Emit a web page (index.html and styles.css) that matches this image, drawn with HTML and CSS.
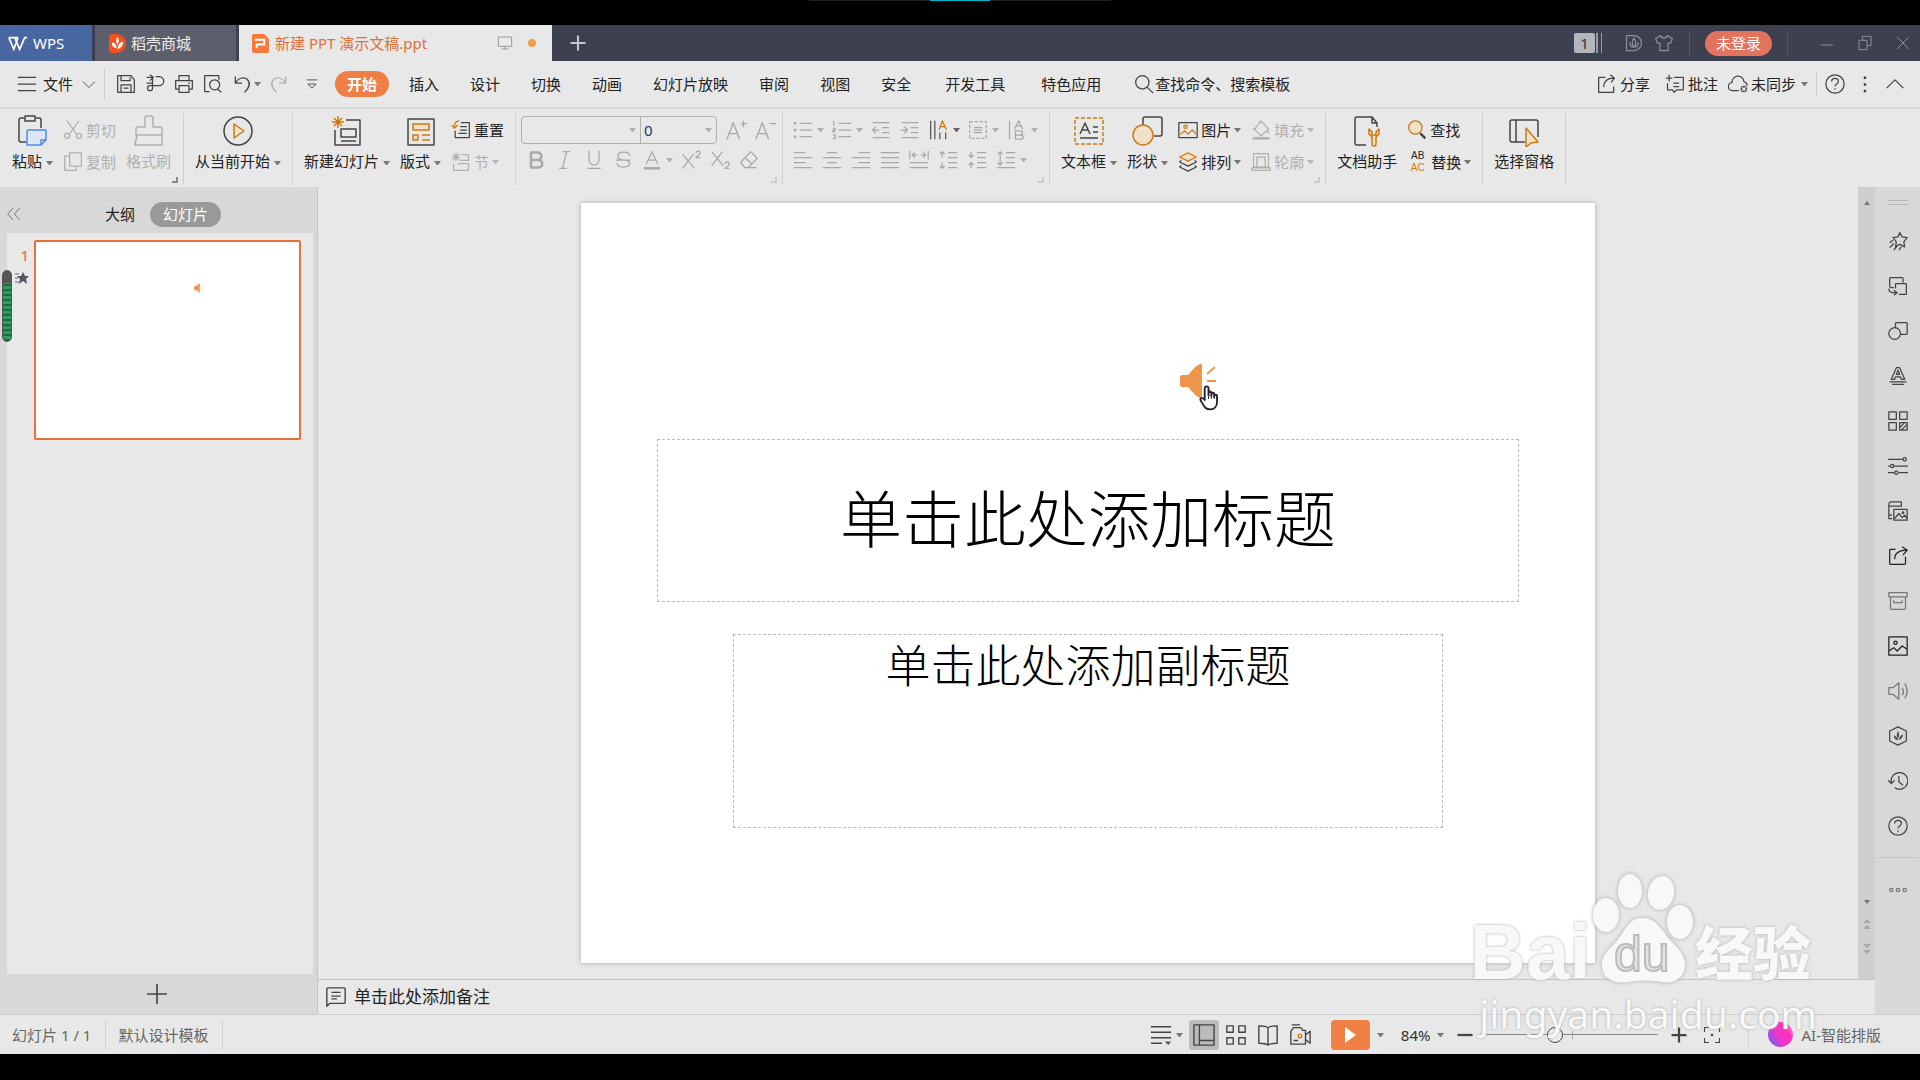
FILE: index.html
```html
<!DOCTYPE html>
<html lang="zh-CN">
<head>
    <meta charset="UTF-8">
    <meta name="viewport" content="width=device-width, initial-scale=1.0">
    <title>新建 PPT 演示文稿.ppt</title>
    <link rel="stylesheet" href="styles.css">
</head>
<body>
    <div class="top-edge"><span class="edge-line"></span></div>

    <!-- tabs -->
    <header class="titlebar">
        <button class="tab tab-wps">
            <svg class="logo-w" viewBox="0 0 24 20"><path d="M1 3h11M1 3l6 14 5-14M8 3l6 14 6-14h3M12 3l-2 5"/></svg>
            WPS
        </button>
        <button class="tab tab-store">
            <svg class="logo-s" viewBox="0 0 18 20"><path fill="#f4511e" d="M0 3a3 3 0 0 1 3-3h5a10 10 0 0 1 0 20H3a3 3 0 0 1-3-3z"/><path fill="#fff" d="M9 3c2 3 2 5 0 8-2-3-2-5 0-8zM3 9c3 0 5 2 5 6-3 0-5-2-5-6zM15 8c0 4-2 7-6 8 0-4 2-7 6-8z"/></svg>
            稻壳商城
        </button>
        <div class="tab tab-file">
            <svg class="logo-p" viewBox="0 0 18 20"><path fill="#f77a3c" d="M2 0h11l5 5v13a2 2 0 0 1-2 2H2a2 2 0 0 1-2-2V2a2 2 0 0 1 2-2z"/><path fill="none" stroke="#fff" stroke-width="2" d="M3 6h10v5H5v4"/></svg>
            <span class="file-name">新建 PPT 演示文稿.ppt</span>
            <svg class="ic s16 grey" viewBox="0 0 24 24"><path d="M2 3h20v14H2zM12 17v4M7 21h10"/></svg>
            <span class="unsaved"></span>
        </div>
        <button class="new-tab" aria-label="新建标签"><svg class="ic s20" viewBox="0 0 24 24"><path d="M12 3v18M3 12h18"/></svg></button>
        <div class="window-tools">
            <span class="count">1</span><span class="stack"></span>
            <button aria-label="稻壳"><svg class="ic s20" viewBox="0 0 24 24"><path d="M3 3h9a9 9 0 0 1 0 18H3zM12 6c3 4 3 7 0 11-3-4-3-7 0-11zM7 11c0 4 2 6 5 6 3 0 5-2 5-6"/></svg></button>
            <button aria-label="皮肤"><svg class="ic s20" viewBox="0 0 24 24"><path d="M8 3c1 4 7 4 8 0l6 4-2 5h-3v9H7v-9H4L2 7z"/></svg></button>
            <span class="bar"></span>
            <button class="login">未登录</button>
            <span class="bar"></span>
            <button class="win" aria-label="最小化"><svg class="ic s16" viewBox="0 0 24 24"><path d="M3 15h18"/></svg></button>
            <button class="win" aria-label="还原"><svg class="ic s16" viewBox="0 0 24 24"><path d="M3 8h12v14H3zM8 8V2h13v14h-6"/></svg></button>
            <button class="win" aria-label="关闭"><svg class="ic s16" viewBox="0 0 24 24"><path d="M3 3l18 18M21 3L3 21"/></svg></button>
        </div>
    </header>

    <!-- menu -->
    <nav class="menubar">
        <button class="file-btn">
            <svg class="ic s20" viewBox="0 0 24 24"><path d="M1 4h22M1 12h22M1 20h22"/></svg>文件
            <svg class="ic s14 chevron" viewBox="0 0 24 24"><path d="M2 8l10 10L22 8"/></svg>
        </button>
        <div class="quick">
            <button aria-label="保存"><svg class="ic s20" viewBox="0 0 24 24"><path d="M2 2h16l4 5v15H2zM6 2v6h11V4M6 22v-9h12v9M9 17h6"/></svg></button>
            <button aria-label="输出"><svg class="ic s20" viewBox="0 0 24 24"><path d="M2 4h7v7H2M6 1l4 3-4 4M13 3h4a5 5 0 0 1 0 11H9M9 8v9a3 3 0 1 1-3-3h8"/></svg></button>
            <button aria-label="打印"><svg class="ic s20" viewBox="0 0 24 24"><path d="M6 8V2h12v6M6 18H2V8h20v10h-4M6 14h12v8H6zM17 11h2"/></svg></button>
            <button aria-label="打印预览"><svg class="ic s20" viewBox="0 0 24 24"><path d="M8 21H2V2h17v5M17 18l5 4"/><circle cx="14" cy="13" r="6"/></svg></button>
            <button class="undo" aria-label="撤消"><svg class="ic s20" viewBox="0 0 24 24"><path d="M4 3v8h8M4 11c3-6 9-8 14-5 5 5 3 10-3 16"/></svg><i class="arrow"></i></button>
            <button aria-label="恢复" class="off"><svg class="ic s20" viewBox="0 0 24 24"><path d="M20 3v8h-8M20 11c-3-6-9-8-14-5-5 5-3 10 3 16"/></svg></button>
            <button aria-label="自定义"><svg class="ic s14" viewBox="0 0 24 24"><path d="M3 5h18M5 12l7 7 7-7z"/></svg></button>
        </div>
        <div class="menu-tabs">
            <button class="active">开始</button>
            <button>插入</button>
            <button>设计</button>
            <button>切换</button>
            <button>动画</button>
            <button>幻灯片放映</button>
            <button>审阅</button>
            <button>视图</button>
            <button>安全</button>
            <button class="wide">开发工具</button>
            <button class="wide">特色应用</button>
        </div>
        <button class="search"><svg class="ic s20" viewBox="0 0 24 24"><circle cx="10" cy="10" r="8"/><path d="M16 16l7 7"/></svg>查找命令、搜索模板</button>
        <div class="menu-right">
            <button><svg class="ic s20" viewBox="0 0 24 24"><path d="M10 4H2v18h18v-7M8 16c0-7 4-11 12-11M16 1l5 4-4 5"/></svg>分享</button>
            <button><svg class="ic s20" viewBox="0 0 24 24"><path d="M11 4h11v15h-8l-3 3-2-3H3v-8M5 1v8M1 5h8M10 11h7M10 15h7"/></svg>批注</button>
            <button><svg class="ic s20" viewBox="0 0 24 24"><path d="M13 20H6a5 5 0 0 1-1-10 7 7 0 0 1 14-1c3 1 4 3 4 5"/><circle cx="19" cy="18" r="4" class="solid"/><path class="white" d="M17 16l4 4M21 16l-4 4"/></svg>未同步<i class="arrow"></i></button>
            <span class="bar"></span>
            <button aria-label="帮助"><svg class="ic s20" viewBox="0 0 24 24"><circle cx="12" cy="12" r="11"/><path d="M8 9c0-5 8-5 8 0 0 3-4 3-4 6M12 17v2"/></svg></button>
            <button class="dots" aria-label="更多"><svg class="ic s20" viewBox="0 0 24 24"><path class="heavy" d="M12 3v3M12 11v3M12 19v3"/></svg></button>
            <button aria-label="收起功能区"><svg class="ic s20" viewBox="0 0 24 24"><path d="M2 17L12 7l10 10"/></svg></button>
        </div>
    </nav>

    <!-- ribbon -->
    <section class="ribbon">
        <div class="group">
            <button class="big">
                <svg class="ic s32" viewBox="0 0 32 32"><path d="M9 27H4a2 2 0 0 1-2-2V5a2 2 0 0 1 2-2h3m12 0h3a2 2 0 0 1 2 2v8M8 1h10v5H8z"/><path class="blue" d="M13 15h16v10l-5 5H10V17a2 2 0 0 1 3-2zM29 25h-5v5"/></svg>
                <span>粘贴<i class="arrow"></i></span>
            </button>
            <div class="col off">
                <button><svg class="ic s20" viewBox="0 0 24 24"><path d="M5 1l12 17M19 1L7 18"/><circle cx="5" cy="19" r="3"/><circle cx="19" cy="19" r="3"/></svg>剪切</button>
                <button><svg class="ic s20" viewBox="0 0 24 24"><path d="M8 1h14v16H8zM8 5H2v17h14v-5"/></svg>复制</button>
            </div>
            <button class="big off">
                <svg class="ic s32" viewBox="0 0 32 32"><path d="M12 12V3a2 2 0 0 1 2-2h4a2 2 0 0 1 2 2v9h7a2 2 0 0 1 2 2v6H3v-6a2 2 0 0 1 2-2zM4 20L2 30h27V20"/></svg>
                <span>格式刷</span>
            </button>
            <i class="corner dark"></i>
        </div>
        <div class="group">
            <button class="big">
                <svg class="ic s32" viewBox="0 0 32 32"><circle cx="16" cy="16" r="14"/><path class="org" d="M12 9l10 7-10 7z"/></svg>
                <span>从当前开始<i class="arrow"></i></span>
            </button>
        </div>
        <div class="group">
            <button class="big">
                <svg class="ic s32" viewBox="0 0 32 32"><path d="M15 5h14v25H4V15M10 14h15v8H10zM10 26h15"/><path class="org" d="M7 1v12M1 7h12M3 3l8 8M11 3l-8 8"/></svg>
                <span>新建幻灯片<i class="arrow"></i></span>
            </button>
            <button class="big">
                <svg class="ic s32" viewBox="0 0 32 32"><path d="M3 4h26v26H3z"/><path class="org" d="M8 9h16v6H8zM8 20h5v5H8zM17 20h8M17 25h8"/></svg>
                <span>版式<i class="arrow"></i></span>
            </button>
            <div class="col">
                <button><svg class="ic s20" viewBox="0 0 24 24"><path d="M12 3h10v18H5v-8M11 8h8M11 12h8M9 16h10"/><path class="org line" d="M10 1C5 1 4 4 4 9M1 6l3 4 4-4"/></svg>重置</button>
                <button class="off"><svg class="ic s20" viewBox="0 0 24 24"><path d="M12 3h9v7H11M3 14v8h18v-8H8M6 1v10M1 6h10M2 2l8 8M10 2l-8 8"/></svg>节<i class="arrow"></i></button>
            </div>
        </div>
        <div class="group font-group">
            <div class="rows">
                <div class="row">
                    <div class="combo">
                        <label class="font-name"><select aria-label="字体"><option></option></select><i class="arrow"></i></label>
                        <label class="font-size"><select aria-label="字号"><option>0</option></select><i class="arrow"></i></label>
                    </div>
                    <button aria-label="增大字号"><svg class="ic s22" viewBox="0 0 24 24"><path d="M2 22L9 4l7 18M4 16h10M20 2v7M17 5h7"/></svg></button>
                    <button aria-label="减小字号"><svg class="ic s22" viewBox="0 0 24 24"><path d="M2 22L9 4l7 18M4 16h10M17 5h7"/></svg></button>
                </div>
                <div class="row">
                    <button aria-label="加粗"><svg class="ic s20" viewBox="0 0 24 24"><path class="heavy" d="M6 3h8a4 4 0 0 1 0 9H6zM6 12h9a4 4 0 0 1 0 9H6z"/></svg></button>
                    <button aria-label="倾斜"><svg class="ic s20" viewBox="0 0 24 24"><path d="M9 2h9M5 22h9M14 2L9 22"/></svg></button>
                    <button aria-label="下划线"><svg class="ic s20" viewBox="0 0 24 24"><path d="M6 1v11a6 6 0 0 0 12 0V1M4 22h16"/></svg></button>
                    <button aria-label="删除线"><svg class="ic s20" viewBox="0 0 24 24"><path d="M20 7c0-6-14-6-14 0 0 3 2 5 7 5h8M3 12h10c4 0 7 1 7 4 0 6-15 6-15 0"/></svg></button>
                    <button class="split" aria-label="字体颜色"><svg class="ic s20" viewBox="0 0 24 24"><path d="M5 17l7-15 7 15M7 12h10"/><path class="heavy" d="M2 22h20"/></svg><i class="arrow"></i></button>
                    <button aria-label="上标"><svg class="ic s20" viewBox="0 0 24 24"><path d="M2 5l14 17M15 5L2 22M18 4c0-4 5-3 5 0 0 2-5 4-5 5h5"/></svg></button>
                    <button aria-label="下标"><svg class="ic s20" viewBox="0 0 24 24"><path d="M2 2l14 17M15 2L2 19M18 17c0-4 5-3 5 0 0 2-5 4-5 5h5"/></svg></button>
                    <button aria-label="清除格式"><svg class="ic s20" viewBox="0 0 24 24"><path d="M14 2l8 8-11 11H7l-5-6zM7 9l9 8M6 21h15"/></svg></button>
                </div>
            </div>
            <i class="corner"></i>
        </div>
        <div class="group para-group">
            <div class="rows">
                <div class="row">
                    <button class="split" aria-label="项目符号"><svg class="ic s20" viewBox="0 0 24 24"><path d="M8 4h15M8 12h15M8 20h15"/><path class="heavy" d="M1 4h3M1 12h3M1 20h3"/></svg><i class="arrow"></i></button>
                    <button class="split" aria-label="编号"><svg class="ic s20" viewBox="0 0 24 24"><path d="M8 4h15M8 12h15M8 20h15M2 1v6M1 10h3v2H1v2h3M1 18h3v4H1"/></svg><i class="arrow"></i></button>
                    <button aria-label="减少缩进"><svg class="ic s20" viewBox="0 0 24 24"><path d="M2 3h20M13 9h9M13 15h9M2 21h20M10 12H2M6 8l-4 4 4 4"/></svg></button>
                    <button aria-label="增加缩进"><svg class="ic s20" viewBox="0 0 24 24"><path d="M2 3h20M13 9h9M13 15h9M2 21h20M1 12h8M5 8l4 4-4 4"/></svg></button>
                    <button class="split on" aria-label="文字方向"><svg class="ic s20" viewBox="0 0 24 24"><path d="M2 1v22M7 1v22M13 15v8M20 15v8"/><path class="org line" d="M12 12l4-11 5 11M13 8h6"/></svg><i class="arrow"></i></button>
                    <button class="split" aria-label="对齐文本"><svg class="ic s20" viewBox="0 0 24 24"><path class="dash" d="M2 2h20v20H2z"/><path d="M7 9h10M7 12h10M7 15h10"/></svg><i class="arrow"></i></button>
                    <button class="split" aria-label="转换"><svg class="ic s20" viewBox="0 0 24 24"><path d="M3 1v22M9 11l5-10 5 10M11 7h6M10 13h6a2 2 0 0 1 0 5h-6zM10 18h7a2 2 0 0 1 0 5h-7z"/></svg><i class="arrow"></i></button>
                </div>
                <div class="row">
                    <button aria-label="左对齐"><svg class="ic s20" viewBox="0 0 24 24"><path d="M1 3h14M1 9h22M1 15h14M1 21h22"/></svg></button>
                    <button aria-label="居中"><svg class="ic s20" viewBox="0 0 24 24"><path d="M6 3h12M1 9h22M6 15h12M1 21h22"/></svg></button>
                    <button aria-label="右对齐"><svg class="ic s20" viewBox="0 0 24 24"><path d="M9 3h14M1 9h22M9 15h14M1 21h22"/></svg></button>
                    <button aria-label="两端对齐"><svg class="ic s20" viewBox="0 0 24 24"><path d="M1 3h22M1 9h22M1 15h22M1 21h22"/></svg></button>
                    <button aria-label="分散对齐"><svg class="ic s20" viewBox="0 0 24 24"><path d="M1 1v10M23 1v10M4 6h6M14 6h6M7 3L4 6l3 3M17 3l3 3-3 3M1 15h22M1 21h22"/></svg></button>
                    <button aria-label="增加行距"><svg class="ic s20" viewBox="0 0 24 24"><path d="M12 3h11M12 9h11M12 15h11M12 21h11M5 9V2M2 5l3-3 3 3M5 15v7M2 19l3 3 3-3"/></svg></button>
                    <button aria-label="减少行距"><svg class="ic s20" viewBox="0 0 24 24"><path d="M12 3h11M12 9h11M12 15h11M12 21h11M5 2v7M2 6l3 3 3-3M5 22v-7M2 18l3-3 3 3"/></svg></button>
                    <button class="split" aria-label="行距"><svg class="ic s20" viewBox="0 0 24 24"><path d="M12 3h11M12 9h11M12 15h11M1 21h22M5 2v16M2 5l3-3 3 3M2 15l3 3 3-3"/></svg><i class="arrow"></i></button>
                </div>
            </div>
            <i class="corner"></i>
        </div>
        <div class="group">
            <button class="big">
                <svg class="ic s32" viewBox="0 0 32 32"><path class="org line dash" d="M2 3h28v26H2z"/><path d="M7 19l5-11 5 11M9 15h6M20 12h5M20 17h5M7 23h18"/></svg>
                <span>文本框<i class="arrow"></i></span>
            </button>
            <button class="big">
                <svg class="ic s32" viewBox="0 0 32 32"><path d="M11 10V4a2 2 0 0 1 2-2h15a2 2 0 0 1 2 2v15a2 2 0 0 1-2 2h-6"/><circle class="org" cx="11" cy="20" r="10"/></svg>
                <span>形状<i class="arrow"></i></span>
            </button>
            <div class="col">
                <button><svg class="ic s20" viewBox="0 0 24 24"><path d="M1 3h22v18H1z"/><path class="org line" d="M3 17l5-4 4 4 5-5 5 5"/><circle class="org" cx="9" cy="8" r="2"/></svg>图片<i class="arrow"></i></button>
                <button><svg class="ic s20" viewBox="0 0 24 24"><path class="org" d="M12 1l10 5-10 5L2 6z"/><path d="M4 10l-2 2 10 5 10-5-2-2M4 16l-2 2 10 5 10-5-2-2"/></svg>排列<i class="arrow"></i></button>
            </div>
            <div class="col off">
                <button><svg class="ic s20" viewBox="0 0 24 24"><path d="M9 4l3-3 9 10-9 8-8-8 8-9M2 11h4M19 13l3 3"/><path class="heavy" d="M2 22h20"/></svg>填充<i class="arrow"></i></button>
                <button><svg class="ic s20" viewBox="0 0 24 24"><path d="M3 2h18v16H3zM7 6h10v12H7zM1 19h22v3H1z"/></svg>轮廓<i class="arrow"></i></button>
            </div>
            <i class="corner"></i>
        </div>
        <div class="group">
            <button class="big">
                <svg class="ic s32" viewBox="0 0 32 32"><path d="M15 30H6a2 2 0 0 1-2-2V4a2 2 0 0 1 2-2h15l5 6v4M21 2v6h5"/><path class="org" d="M18 14v5l3 3v7a2 2 0 0 0 4 0v-7l3-3v-5l-3 3v3h-4v-3z"/></svg>
                <span>文档助手</span>
            </button>
            <div class="col">
                <button><svg class="ic s20" viewBox="0 0 24 24"><circle class="org" cx="10" cy="9" r="8"/><path class="heavy" d="M16 16l6 6"/></svg>查找</button>
                <button>
                    <span class="abac"><b>AB</b><b>AC</b></span>替换<i class="arrow"></i>
                </button>
            </div>
        </div>
        <div class="group">
            <button class="big">
                <svg class="ic s32" viewBox="0 0 32 32"><path d="M17 27H4a2 2 0 0 1-2-2V7a2 2 0 0 1 2-2h24a2 2 0 0 1 2 2v15M8 5v22"/><path class="org" d="M18 13l12 14-7 1-5 4z"/></svg>
                <span>选择窗格</span>
            </button>
        </div>
    </section>

    <main class="workspace">
        <aside class="slides-panel">
            <div class="panel-head">
                <button class="fold" aria-label="折叠"><svg class="ic s16" viewBox="0 0 24 24"><path d="M9 3l-8 9 8 9M19 3l-8 9 8 9"/></svg></button>
                <button class="panel-tab">大纲</button>
                <button class="panel-tab chosen">幻灯片</button>
            </div>
            <div class="thumb-list">
                <div class="thumb-info">
                    <b>1</b>
                    <svg class="anim" viewBox="0 0 14 12"><path d="M0 2h4M0 6h3M0 10h4" stroke="#667" fill="none"/><path fill="#556" d="M8 0l2 4h4l-3 3 1 5-4-3-4 3 1-5-3-3h4z"/></svg>
                </div>
                <button class="thumb" aria-label="幻灯片 1">
                    <svg class="thumb-audio" viewBox="0 0 36 36"><path fill="#f0954c" d="M0 12h7L21 1v34L7 25H0z"/><path stroke="#f6c79c" stroke-width="3" d="M27 11l8-7M27 18h9M27 25l8 7"/></svg>
                </button>
            </div>
            <button class="add-slide" aria-label="新建幻灯片"><svg class="ic s20" viewBox="0 0 24 24"><path d="M12 0v24M0 12h24"/></svg></button>
            <div class="meter"></div>
        </aside>

        <div class="center">
            <div class="stage-row">
                <div class="stage">
                    <div class="slide">
                        <div class="holder title">单击此处添加标题</div>
                        <div class="holder subtitle">单击此处添加副标题</div>
                        <svg class="audio" viewBox="0 0 36 36"><path fill="#f0954c" d="M2 12h6C12 8 15 3 20 1q2-1 2 1v32q0 2-2 1C15 33 12 28 8 24H2q-2 0-2-2v-8q0-2 2-2z"/><path fill="none" stroke="#f0954c" stroke-width="2" d="M27 11l8-7M27 18h9M27 25l8 7"/></svg>
                        <svg class="hand" viewBox="0 0 20 26"><path fill="#fff" stroke="#223" stroke-width="2" stroke-linejoin="round" d="M6 15V3c0-3 4-3 4 0v7-2c0-2 3-2 3 0v3-2c0-2 3-2 3 0v3-1c0-2 3-2 3 0v6c0 5-3 8-7 8-5 0-6-2-10-9-2-3 2-4 4-1z"/><path stroke="#223" d="M10 9v5M13 10v4M16 11v3"/></svg>
                    </div>
                </div>
                <div class="scroll">
                    <i class="tri up"></i>
                    <span class="track"></span>
                    <i class="tri down"></i>
                    <svg class="jump" viewBox="0 0 8 10"><path d="M0 4l4-4 4 4zM0 10l4-4 4 4z"/></svg>
                    <svg class="jump" viewBox="0 0 8 10"><path d="M0 0l4 4 4-4zM0 6l4 4 4-4z"/></svg>
                </div>
            </div>
            <div class="notes">
                <svg class="ic s22" viewBox="0 0 24 24"><path d="M2 22V3a1 1 0 0 1 1-1h18a1 1 0 0 1 1 1v15a1 1 0 0 1-1 1H5zM7 7h10M7 11h10M7 14h6"/></svg>
                单击此处添加备注
            </div>
        </div>

        <aside class="rail">
            <span class="grip"></span>
            <button aria-label="动画"><svg class="ic s20" viewBox="0 0 24 24"><path d="M14 2l3 5 6 1-4 5 1 6-6-3-5 3 1-6-4-5 6-1zM6 11l-4 3M7 15l-5 5M11 18l-4 5M16 19l-3 4"/></svg></button>
            <button aria-label="切换"><svg class="ic s20" viewBox="0 0 24 24"><path d="M7 14H4a2 2 0 0 1-2-2V3a1 1 0 0 1 1-1h14a1 1 0 0 1 1 1v5M9 9h13v13H13M9 9v6M1 15c0 3 2 5 5 5h4M7 17l4 3-4 3"/></svg></button>
            <button aria-label="形状"><svg class="ic s20" viewBox="0 0 24 24"><circle cx="8" cy="15" r="7"/><path d="M9 8V3a1 1 0 0 1 1-1h12a1 1 0 0 1 1 1v12a1 1 0 0 1-1 1h-7"/></svg></button>
            <button aria-label="艺术字"><svg class="ic s20" viewBox="0 0 24 24"><path d="M4 16L10 2h4l6 14h-4l-1-3H9l-1 3zM10 10l2-5 2 5zM2 19h20M5 22h14"/></svg></button>
            <button aria-label="模板"><svg class="ic s20" viewBox="0 0 24 24"><path d="M1 1h9v9H1zM14 1h9v9h-9zM1 14h9v9H1zM14 14h9v9h-9zM14 20l6-6M16 23l7-7"/></svg></button>
            <button aria-label="属性"><svg class="ic s20" viewBox="0 0 24 24"><path d="M0 4h18M0 12h2M7 12h17M0 20h8M13 20h11"/><circle cx="20" cy="4" r="2"/><circle cx="5" cy="12" r="2"/><circle cx="10" cy="20" r="2"/></svg></button>
            <button aria-label="图库"><svg class="ic s20" viewBox="0 0 24 24"><path d="M5 21H1V4a3 3 0 0 1 3-3h12v6M1 6h15M7 10h16v13H7zM8 21l5-6 4 5 3-3 3 4M1 17h4"/><circle cx="18" cy="14" r="1"/></svg></button>
            <button aria-label="分享"><svg class="ic s20 deep" viewBox="0 0 24 24"><path d="M9 4H3a1 1 0 0 0-1 1v16a1 1 0 0 0 1 1h17a1 1 0 0 0 1-1v-8M8 16c0-7 5-11 15-11M17 1l6 4-5 6"/></svg></button>
            <button aria-label="归档"><svg class="ic s20 pale" viewBox="0 0 24 24"><path d="M1 2h22v5H1zM3 7v14a1 1 0 0 0 1 1h16a1 1 0 0 0 1-1V7M7 11v3h10v-3"/></svg></button>
            <button aria-label="图片"><svg class="ic s20 deep" viewBox="0 0 24 24"><path d="M1 1h22v22H1zM1 18l6-4 4 4 6-6 6 4"/><circle cx="9" cy="8" r="2"/></svg></button>
            <button aria-label="声音"><svg class="ic s20 pale" viewBox="0 0 24 24"><path d="M1 8h5l7-6v20l-7-6H1zM17 8c2 3 2 6 0 9M20 3c4 6 4 12 0 18"/></svg></button>
            <button aria-label="稻壳资源"><svg class="ic s20" viewBox="0 0 24 24"><path d="M12 1l10 5v12l-10 5-10-5V6z"/><path class="solid" d="M12 6c2 4 2 6 0 9-2-3-2-5 0-9zM7 11c3 1 5 3 5 6-3 0-5-2-5-6zM18 10c0 4-2 6-5 7 0-3 2-6 5-7z"/></svg></button>
            <button aria-label="历史"><svg class="ic s20" viewBox="0 0 24 24"><path d="M4 14a10 10 0 1 1 4 6M0 11l4 4 4-4M13 6v7l5 4"/></svg></button>
            <button aria-label="帮助"><svg class="ic s20" viewBox="0 0 24 24"><circle cx="12" cy="12" r="11"/><path d="M8 9c0-5 8-5 8 0 0 3-4 3-4 6M12 17v2"/></svg></button>
            <hr>
            <button aria-label="更多"><svg class="ic s20 pale" viewBox="0 0 24 24"><circle cx="4" cy="12" r="2"/><circle cx="12" cy="12" r="2"/><circle cx="20" cy="12" r="2"/></svg></button>
        </aside>
    </main>

    <footer class="status">
        <span class="stat">幻灯片 1 / 1</span>
        <span class="stat">默认设计模板</span>
        <div class="view-tools">
            <button aria-label="备注"><svg class="ic s22" viewBox="0 0 24 24"><path d="M1 3h22M1 9h22M1 15h22M1 21h12"/><path class="solid" d="M16 19h7l-3 4z"/></svg><i class="arrow"></i></button>
            <button class="view current" aria-label="普通视图"><svg class="ic s22" viewBox="0 0 24 24"><path d="M1 1h22v22H1zM7 1v22M7 18h16"/></svg></button>
            <button class="view" aria-label="浏览视图"><svg class="ic s22" viewBox="0 0 24 24"><path d="M2 2h7v7H2zM15 2h7v7h-7zM2 15h7v7H2zM15 15h7v7h-7z"/></svg></button>
            <button class="view" aria-label="阅读视图"><svg class="ic s22" viewBox="0 0 24 24"><path d="M12 4c-2-2-6-2-10-2v19c4 0 8 0 10 2 2-2 6-2 10-2V2c-4 0-8 0-10 2zM12 4v19"/></svg></button>
            <button class="view" aria-label="录制"><svg class="ic s22" viewBox="0 0 24 24"><path d="M2 22V8l3-4h8l2 3h3v15zM3 1h9M18 12l5-4v13l-5-4M5 18h5"/><circle class="org" cx="12" cy="13" r="2"/></svg></button>
            <button class="play" aria-label="放映"><svg viewBox="0 0 12 16"><path fill="#fff" d="M1 0l11 8-11 8z"/></svg></button>
            <i class="arrow"></i>
            <button class="percent">84%<i class="arrow"></i></button>
            <button aria-label="缩小"><svg class="ic s18" viewBox="0 0 24 24"><path class="heavy" d="M2 12h20"/></svg></button>
            <input class="zoom" type="range" min="0" max="100" value="39" aria-label="显示比例">
            <button aria-label="放大"><svg class="ic s18" viewBox="0 0 24 24"><path class="heavy" d="M2 12h20M12 2v20"/></svg></button>
            <button class="fit" aria-label="适应窗口"><svg class="ic s18" viewBox="0 0 24 24"><path d="M2 8V2h6M16 2h6v6M22 16v6h-6M8 22H2v-6"/><circle cx="12" cy="12" r="1"/></svg></button>
            <span class="bar"></span>
            <button class="ai"><span class="orb"></span>AI-智能排版</button>
        </div>
    </footer>
    <div class="bottom-edge"></div>

    <!-- watermark -->
    <div class="mark">
        <div class="mark-top">
            <span class="mark-bai">Bai</span>
            <svg class="mark-paw" viewBox="0 0 104 112">
                <g class="paw">
                    <ellipse cx="15" cy="43" rx="13" ry="17"/>
                    <ellipse cx="39" cy="19" rx="12" ry="17"/>
                    <ellipse cx="70" cy="21" rx="13" ry="17" transform="rotate(12 70 21)"/>
                    <ellipse cx="89" cy="50" rx="13" ry="17"/>
                    <path d="M51 46c15 0 19 12 28 22 10 10 16 17 15 27-2 13-13 17-24 15-8-2-24-2-32 0-15 2-26-3-27-15-1-11 7-18 14-25C34 60 37 46 51 46z"/>
                </g>
                <text x="23" y="99">du</text>
            </svg>
            <span class="mark-cn">经验</span>
        </div>
        <div class="mark-url">jingyan.baidu.com</div>
    </div>
</body>
</html>
```

FILE: styles.css
```css
* {
    box-sizing: border-box;
}
html, body {
    height: 100%;
    margin: 0;
}
body {
    display: flex;
    flex-direction: column;
    overflow: hidden;
    position: relative;
    background: #e8e8e8;
    color: #222;
    font-family: "Noto Sans", "Noto Sans CJK SC", sans-serif;
    font-size: 15px;
    line-height: 20px;
}
button {
    display: flex;
    align-items: center;
    padding: 0;
    border: none;
    background: none;
    color: inherit;
    font: inherit;
    white-space: nowrap;
}

/* icons */
.ic {
    flex: none;
    fill: none;
    stroke: #444;
    stroke-width: 1.5;
    stroke-linejoin: round;
}
.s14 { width: 14px; height: 14px; }
.s16 { width: 16px; height: 16px; }
.s18 { width: 18px; height: 18px; }
.s20 { width: 20px; height: 20px; }
.s22 { width: 22px; height: 22px; }
.s32 { width: 32px; height: 32px; }
.heavy { stroke-width: 3; }
.solid { fill: #555; stroke: none; }
.white { stroke: #fff; }
.blue { stroke: #4f8ae8; fill: #dbe6f7; }
.org { stroke: #cc7a10; fill: #f1e0c8; }
.line { fill: none; }
.dash { stroke-dasharray: 4 2; }
.grey { stroke: #999; }
.pale { stroke: #777; }
.deep { stroke: #222; }
.arrow {
    flex: none;
    display: inline-block;
    width: 7px;
    margin-left: 4px;
    border: 3px solid transparent;
    border-top: 4px solid #777;
    border-bottom: none;
    vertical-align: middle;
}
.off {
    color: #b0b0b0;
}
.off .ic, .off.ic {
    stroke: #b0b0b0;
}
.off .arrow {
    border-top-color: #b8b8b8;
}
.bar {
    width: 1px;
    height: 26px;
    background: #d0d0d0;
}

.top-edge {
    flex: none;
    height: 25px;
    background: #000;
    display: flex;
    justify-content: center;
    align-items: flex-start;
}
.edge-line {
    width: 302px;
    height: 1px;
    background: linear-gradient(90deg, #222 40%, #00b7c3 40%, #00b7c3 60%, #222 60%);
}
.bottom-edge {
    flex: none;
    height: 26px;
    background: #000;
}

/* title bar */
.titlebar {
    flex: none;
    height: 36px;
    display: flex;
    background: #3d404e;
    color: #fff;
}
.tab {
    margin-right: 3px;
    gap: 5px;
}
.tab-wps {
    width: 92px;
    padding-left: 8px;
    background: #4866a0;
}
.logo-w {
    width: 20px;
    height: 17px;
    fill: none;
    stroke: #fff;
    stroke-width: 2;
}
.tab-store {
    width: 141px;
    padding-left: 14px;
    background: #5c5f6b;
    color: #eee;
}
.logo-s, .logo-p {
    width: 17px;
    height: 19px;
}
.tab-file {
    width: 313px;
    display: flex;
    align-items: center;
    gap: 6px;
    margin: 0;
    padding: 0 16px 0 13px;
    background: #e8e8e8;
    color: #e0703a;
}
.file-name {
    flex: 1;
}
.unsaved {
    width: 8px;
    height: 8px;
    margin-left: 9px;
    border-radius: 50%;
    background: #eca04e;
}
.new-tab {
    padding: 0 16px;
}
.new-tab .ic {
    stroke: #c4c6cc;
    stroke-width: 2.5;
}
.window-tools {
    display: flex;
    align-items: center;
    margin-left: auto;
    padding-right: 9px;
}
.window-tools .ic {
    stroke: #8b8e99;
}
.window-tools button {
    margin-left: 10px;
}
.window-tools .bar {
    margin: 0 0 0 15px;
    height: 24px;
    background: #555866;
}
.window-tools .login {
    margin-left: 15px;
    height: 25px;
    padding: 0 11px;
    border-radius: 13px;
    background: #e2735c;
}
.window-tools .win {
    margin-left: 22px;
}
.window-tools .bar + .win {
    margin-left: 31px;
}
.count {
    width: 21px;
    border-radius: 2px;
    background: #b4b6bd;
    color: #333;
    text-align: center;
}
.stack {
    width: 6px;
    height: 20px;
    margin: 0 12px 0 1px;
    border: solid #9a9ca6;
    border-width: 0 1px 0 2px;
}

/* menu bar */
.menubar {
    flex: none;
    height: 48px;
    display: flex;
    align-items: center;
    border-bottom: 2px solid #d8d8d8;
}
.file-btn {
    height: 30px;
    padding: 0 8px 0 17px;
    gap: 6px;
    border-right: 1px solid #ccc;
}
.chevron {
    margin-left: 3px;
}
.quick {
    display: flex;
    padding-left: 6px;
}
.quick button {
    min-width: 29px;
    justify-content: center;
}
.quick .arrow {
    margin-left: 2px;
}
.quick .undo {
    margin: 0 3px 0 5px;
}
.quick button:last-child {
    margin-left: 4px;
}
.menu-tabs {
    display: flex;
    padding-left: 9px;
}
.menu-tabs button {
    height: 26px;
    padding: 0 16px 0 15px;
}
.menu-tabs .wide {
    padding: 0 18px;
}
.menu-tabs .active {
    padding: 0 12px;
    margin-right: 5px;
    border-radius: 13px;
    background: #ee8047;
    color: #fff;
    font-weight: bold;
}
.search {
    margin-left: 15px;
    gap: 1px;
}
.menu-right {
    display: flex;
    align-items: center;
    gap: 10px;
    margin-left: auto;
    padding-right: 15px;
}
.menu-right button {
    gap: 3px;
}
.menu-right button:first-child {
    margin-right: 5px;
}
.menu-right .arrow {
    margin-left: 2px;
}
.menu-right .bar {
    margin: 0 -2px;
}

/* ribbon */
.ribbon {
    flex: none;
    height: 78px;
    display: flex;
    padding-top: 4px;
}
.group {
    position: relative;
    display: flex;
    align-items: flex-start;
    gap: 10px;
    height: 72px;
    padding: 2px 11px;
    border-right: 1px solid #d0d0d0;
}
.group:first-child {
    padding: 2px 12px;
}
.big {
    flex-direction: column;
    gap: 4px;
}
.col {
    display: flex;
    flex-direction: column;
    gap: 2px;
}
.col button {
    height: 30px;
    gap: 3px;
}
.col .arrow {
    margin-left: 0;
}
.abac {
    width: 21px;
    display: flex;
    flex-direction: column;
    font-family: "Liberation Sans", sans-serif;
    font-size: 10px;
    line-height: 12px;
}
.abac b {
    font-weight: normal;
}
.abac b + b {
    color: #cc7a10;
}
.row {
    display: flex;
    align-items: center;
    height: 30px;
}
.row button {
    min-width: 29px;
    justify-content: center;
}
.row .split {
    min-width: 39px;
    padding-left: 5px;
    justify-content: flex-start;
}
.rows .ic {
    stroke: #a8a8a8;
}
.rows .arrow {
    border-top-color: #b0b0b0;
}
.rows .on .ic {
    stroke: #555;
}
.rows .on .arrow {
    border-top-color: #666;
}
.font-group {
    padding: 2px 3px 2px 5px;
}
.para-group {
    padding: 2px 8px 2px 5px;
}
.combo {
    display: flex;
    height: 28px;
    margin-right: 4px;
    border: 1px solid #b0b0b0;
    border-radius: 4px;
}
.combo label {
    display: flex;
    align-items: center;
    padding-right: 4px;
}
.combo select {
    flex: 1;
    min-width: 0;
    padding: 0 3px;
    appearance: none;
    border: none;
    background: none;
    font: inherit;
    color: #223a66;
}
.font-name {
    width: 119px;
    border-right: 1px solid #b0b0b0;
}
.font-size {
    width: 75px;
}
.corner {
    position: absolute;
    right: 5px;
    bottom: 2px;
    width: 6px;
    height: 6px;
    border: solid #ccc;
    border-width: 0 2px 2px 0;
}
.corner.dark {
    border-color: #888;
}

/* workspace */
.workspace {
    flex: 1;
    min-height: 0;
    display: flex;
    border-bottom: 1px solid #ccc;
}
.slides-panel {
    position: relative;
    width: 318px;
    flex: none;
    display: flex;
    flex-direction: column;
    padding: 0 4px 0 7px;
    border-right: 1px solid #c4c4c4;
    background: #d8d8d8;
}
.panel-head {
    height: 46px;
    display: flex;
    align-items: center;
    padding-top: 8px;
}
.fold {
    margin-right: 82px;
}
.fold .ic {
    stroke: #777;
}
.panel-tab.chosen {
    height: 25px;
    margin-left: 15px;
    padding: 0 13px;
    border-radius: 13px;
    background: #999;
    color: #fff;
}
.thumb-list {
    flex: 1;
    display: flex;
    align-items: flex-start;
    padding: 7px 12px 0 5px;
    background: #e8e8e8;
}
.thumb-info {
    width: 22px;
    display: flex;
    flex-direction: column;
    align-items: flex-start;
    gap: 7px;
    padding-top: 5px;
}
.thumb-info b {
    align-self: flex-end;
    padding-right: 5px;
    color: #ee7440;
    font-weight: 500;
}
.anim {
    width: 14px;
    height: 12px;
    margin-left: 3px;
}
.thumb {
    position: relative;
    flex: 1;
    aspect-ratio: 4 / 3;
    border: 2px solid #e8703a;
    border-radius: 2px;
    background: #fff;
}
.thumb-audio {
    position: absolute;
    left: 60%;
    top: 21%;
    width: 10px;
    height: 10px;
}
.add-slide {
    height: 40px;
    padding-right: 6px;
    justify-content: center;
}
.add-slide .ic {
    stroke-width: 2;
}
.meter {
    position: absolute;
    left: 2px;
    top: 83px;
    width: 10px;
    height: 72px;
    border: 1px solid #555;
    border-radius: 5px;
    background: linear-gradient(#555 12px, transparent 12px), repeating-linear-gradient(#2f9e5a 0 3px, #1d6a40 3px 5px);
}

.center {
    flex: 1;
    min-width: 0;
    display: flex;
    flex-direction: column;
}
.stage-row {
    flex: 1;
    min-height: 0;
    display: flex;
}
.stage {
    flex: 1;
    display: flex;
    justify-content: center;
    padding: 16px;
}
.slide {
    position: relative;
    height: 100%;
    aspect-ratio: 4 / 3;
    display: grid;
    grid-template-rows: 236fr 163fr 32fr 194fr 135fr;
    justify-items: center;
    background: #fff;
    box-shadow: 0 0 5px #aaa;
    color: #000;
    font-family: "Noto Sans CJK SC", sans-serif;
    font-weight: 300;
}
.holder {
    border: 1px dashed #bbb;
    text-align: center;
}
.title {
    grid-row: 2;
    width: 85%;
    display: flex;
    align-items: center;
    justify-content: center;
    padding-bottom: 10px;
    font-size: 62px;
    line-height: 80px;
}
.subtitle {
    grid-row: 4;
    width: 70%;
    font-size: 45px;
    line-height: 58px;
}
.audio {
    position: absolute;
    left: 59%;
    top: 21%;
    width: 38px;
    height: 36px;
}
.hand {
    position: absolute;
    left: 61%;
    top: 24%;
    width: 19px;
    height: 26px;
}
.scroll {
    width: 17px;
    display: flex;
    flex-direction: column;
    align-items: center;
    gap: 15px;
    padding: 14px 0 25px;
    background: #cfcfcf;
}
.track {
    flex: 1;
}
.tri {
    border: 3px solid transparent;
}
.up {
    border-top: none;
    border-bottom: 4px solid #777;
}
.down {
    border-bottom: none;
    border-top: 4px solid #777;
}
.jump {
    width: 8px;
    height: 10px;
    fill: #a8a8a8;
}
.notes {
    flex: none;
    display: flex;
    align-items: center;
    gap: 7px;
    height: 35px;
    padding-left: 7px;
    border-top: 1px solid #c4c4c4;
    font-size: 17px;
}

.rail {
    width: 45px;
    flex: none;
    display: flex;
    flex-direction: column;
    background: #d8d8d8;
}
.rail button {
    height: 45px;
    justify-content: center;
}
.grip {
    align-self: center;
    width: 20px;
    height: 5px;
    margin: 13px 0;
    border: solid #b8b8b8;
    border-width: 1px 0;
}
.rail hr {
    width: 40px;
    margin: 9px auto;
    border: none;
    border-top: 1px solid #c4c4c4;
}

/* status bar */
.status {
    flex: none;
    height: 39px;
    display: flex;
    align-items: center;
    color: #666;
}
.stat {
    padding: 4px 14px 4px 12px;
    border-right: 1px solid #d0d0d0;
}
.view-tools {
    display: flex;
    align-items: center;
    margin-left: auto;
    padding-right: 39px;
}
.view {
    width: 30px;
    height: 30px;
    margin-left: 2px;
    justify-content: center;
}
.current {
    margin-left: 6px;
    border-radius: 3px;
    background: #bbb;
}
.play {
    width: 39px;
    height: 30px;
    margin: 0 3px 0 16px;
    justify-content: center;
    border-radius: 4px;
    background: #f08045;
}
.play svg {
    width: 12px;
    height: 16px;
}
.percent {
    margin: 0 12px 0 17px;
    gap: 3px;
    color: #333;
}
.zoom {
    width: 172px;
    height: 18px;
    margin: 0 12px;
    appearance: none;
    background: linear-gradient(#888, #888) 50% / 100% 1px no-repeat, linear-gradient(#aaa, #aaa) 50% / 1px 8px no-repeat;
}
.zoom::-webkit-slider-thumb {
    appearance: none;
    width: 16px;
    height: 16px;
    border: 1px solid #444;
    border-radius: 50%;
    background: #eee;
}
.fit {
    margin: 0 27px 0 15px;
}
.ai {
    gap: 8px;
    margin-left: 19px;
}
.orb {
    width: 25px;
    height: 25px;
    border-radius: 50%;
    background: linear-gradient(60deg, #6a5cf5 5%, #f535c8 45%, #ff2fc0 70%, #f8a0d8);
}

/* watermark */
.mark {
    position: absolute;
    right: 103px;
    bottom: 36px;
    display: flex;
    flex-direction: column;
    align-items: flex-end;
    color: #f8f8f8;
    text-shadow: 0 0 3px #aaa;
    pointer-events: none;
}
.mark-top {
    display: flex;
    align-items: flex-end;
    height: 112px;
    padding-right: 6px;
}
.mark-bai {
    font: bold 78px/64px "Liberation Sans", sans-serif;
}
.mark-paw {
    width: 104px;
    height: 112px;
    overflow: visible;
    filter: drop-shadow(0 0 2px #aaa);
}
.paw {
    fill: #f8f8f8;
}
.mark-paw text {
    font: 50px "Liberation Sans", sans-serif;
    fill: #e4e4e4;
    stroke: #bbb;
    stroke-width: 2;
    text-shadow: none;
}
.mark-cn {
    font: 900 58px/68px "Noto Sans CJK SC", sans-serif;
}
.mark-url {
    font-size: 39px;
    line-height: 60px;
}
```
